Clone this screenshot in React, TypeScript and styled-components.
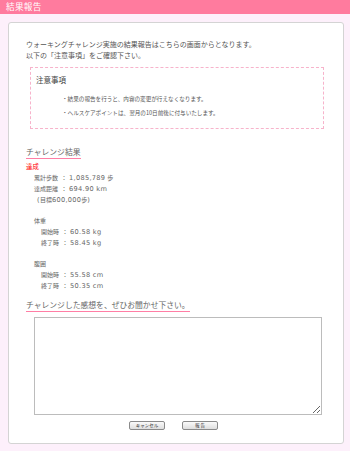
import styled, { createGlobalStyle } from "styled-components";

const GlobalStyle = createGlobalStyle`
	html, body {
		margin: 0;
		padding: 0;
		background: #fdf0fb;
	}
	body {
		font-family: "Noto Sans CJK JP", "Liberation Sans", sans-serif;
		color: #555;
	}
`;

const Page = styled.div`
	width: 350px;
	height: 451px;
	background: #fdf0fb;
`;

const TitleBar = styled.div`
	height: 14px;
	background: #ff7b9e;
	color: #fff;
	font-size: 8.6px;
	line-height: 13px;
	padding-left: 6px;
	letter-spacing: 0.3px;
`;

const Card = styled.div`
	margin: 8px 6px 0 8px;
	height: 422px;
	box-sizing: border-box;
	background: #fff;
	border: 1px solid #d4d4d4;
	border-radius: 3px;
	padding: 16px 0 0 17px;
`;

const Intro = styled.p`
	margin: 0;
	font-size: 7px;
	line-height: 11px;
	color: #555;
`;

const Notice = styled.div`
	margin: 6px 0 0 4px;
	width: 294px;
	height: 62px;
	box-sizing: border-box;
	border: 1px dashed #f7b3cb;
	padding: 6px 0 0 5px;
`;

const NoticeTitle = styled.div`
	font-size: 7.5px;
	line-height: 11px;
	color: #444;
	margin-bottom: 7px;
`;

const NoticeItem = styled.div`
	font-size: 5.6px;
	line-height: 14px;
	padding-left: 26px;
	color: #555;
`;

const Heading = styled.div<{ $mt: number }>`
	display: table;
	margin-top: ${(p) => p.$mt}px;
	height: 12px;
	font-size: 7.8px;
	line-height: 11px;
	color: #666;
	border-bottom: 1px solid #ff7ea5;
`;

const Result = styled.div`
	margin-top: 2px;
	font-size: 6px;
	color: #666;
`;

const Group = styled.div<{ $mt?: number }>`
	margin-top: ${(p) => p.$mt || 0}px;
`;

const Line = styled.div<{ $indent: number; $red?: boolean }>`
	height: 11px;
	line-height: 11px;
	padding-left: ${(p) => p.$indent}px;
	color: ${(p) => (p.$red ? "#f00" : "inherit")};
	font-size: ${(p) => (p.$red ? "6.4px" : "inherit")};
	white-space: pre;
`;

const Sep = styled.span`
	margin: 0 2px 0 3px;
`;

const Value = styled.span`
	font-family: "DejaVu Sans", "Noto Sans CJK JP", sans-serif;
	font-size: 6.6px;
	letter-spacing: 0.3px;
`;

const Unit = styled.span`
	margin-left: 2px;
`;

const TextArea = styled.textarea`
	display: block;
	margin: 5px 0 0 8px;
	width: 288px;
	height: 98px;
	box-sizing: border-box;
	border: 1px solid #bcbcbc;
	resize: both;
	outline: none;
`;

const Buttons = styled.div`
	display: flex;
	gap: 17px;
	margin: 6px 0 0 103px;
`;

const Button = styled.button<{ $w: number }>`
	width: ${(p) => p.$w}px;
	height: 9px;
	padding: 0;
	font-family: "Noto Sans CJK JP", sans-serif;
	font-size: 4.5px;
	line-height: 7px;
	color: #333;
	background: linear-gradient(#fafafa, #dedede);
	border: 1px solid #8a8a8a;
	border-radius: 2px;
`;

function Stat({
	label,
	value,
	unit,
	indent,
}: {
	label: string;
	value: string;
	unit?: string;
	indent: number;
}) {
	return (
		<Line $indent={indent}>
			{label}
			<Sep>：</Sep>
			<Value>{value}</Value>
			{unit && <Unit>{unit}</Unit>}
		</Line>
	);
}

export default function App() {
	return (
		<Page>
			<GlobalStyle />
			<TitleBar>結果報告</TitleBar>
			<Card>
				<Intro>
					ウォーキングチャレンジ実施の結果報告はこちらの画面からとなります。
					<br />
					以下の「注意事項」をご確認下さい。
				</Intro>
				<Notice>
					<NoticeTitle>注意事項</NoticeTitle>
					<NoticeItem>・結果の報告を行うと、内容の変更が行えなくなります。</NoticeItem>
					<NoticeItem>・ヘルスケアポイントは、翌月の10日前後に付与いたします。</NoticeItem>
				</Notice>
				<Heading $mt={17}>チャレンジ結果</Heading>
				<Result>
					<Group>
						<Line $indent={0} $red>
							達成
						</Line>
						<Stat indent={8} label="累計歩数" value="1,085,789" unit="歩" />
						<Stat indent={8} label="達成距離" value="694.90 km" />
						<Line $indent={11}>
							<Value>(</Value>目標<Value>600,000</Value>歩<Value>)</Value>
						</Line>
					</Group>
					<Group $mt={10}>
						<Line $indent={8}>体重</Line>
						<Stat indent={15} label="開始時" value="60.58 kg" />
						<Stat indent={15} label="終了時" value="58.45 kg" />
					</Group>
					<Group $mt={10}>
						<Line $indent={8}>腹囲</Line>
						<Stat indent={15} label="開始時" value="55.58 cm" />
						<Stat indent={15} label="終了時" value="50.35 cm" />
					</Group>
				</Result>
				<Heading $mt={8}>チャレンジした感想を、ぜひお聞かせ下さい。</Heading>
				<TextArea />
				<Buttons>
					<Button $w={36}>キャンセル</Button>
					<Button $w={36}>報 告</Button>
				</Buttons>
			</Card>
		</Page>
	);
}
